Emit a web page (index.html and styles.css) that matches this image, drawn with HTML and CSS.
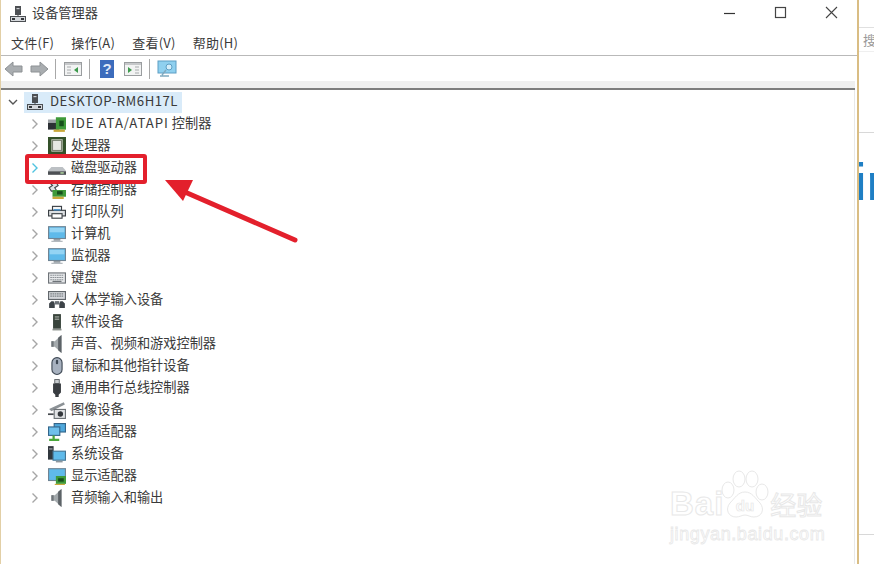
FILE: index.html
```html
<!DOCTYPE html>
<html lang="zh-CN">
<head>
<meta charset="utf-8">
<title>设备管理器</title>
<link rel="stylesheet" href="styles.css">
</head>
<body>
<svg class="defs" width="0" height="0">
  <defs>
    <symbol id="chev" viewBox="0 0 10 10"><path d="M2.500 0.500l4.500 4.500-4.500 4.500" fill="none" stroke="currentColor" stroke-width="1.400"/></symbol>
    <symbol id="pc" viewBox="0 0 16 16">
      <rect x="5" y="0" width="6" height="9" fill="#4c4f53"/>
      <rect x="6.500" y="2" width="3" height="1.200" fill="#c9ccd0"/>
      <rect x="7.500" y="8" width="1" height="3" fill="#4c4f53"/>
      <rect x="0.500" y="10.500" width="15" height="5" fill="#d5d8dc" stroke="#4c4f53"/>
      <rect x="2" y="12" width="3" height="2" fill="#33363a"/>
      <rect x="11" y="12" width="3" height="2" fill="#33363a"/>
    </symbol>
    <symbol id="ide" viewBox="0 0 16 16">
      <rect x="0" y="4" width="10" height="3" fill="#9ea2a6"/>
      <rect x="0" y="7" width="10" height="6" fill="#2c3034"/>
      <rect x="7" y="2" width="9" height="11" fill="#3f9a3a"/>
      <rect x="10" y="5" width="4" height="5" fill="#174f1c"/>
      <rect x="5" y="13" width="10" height="2" fill="#c9a83a"/>
    </symbol>
    <symbol id="cpu" viewBox="0 0 16 16">
      <rect x="1.500" y="0.500" width="13" height="14" fill="#d4d8cc" stroke="#34512a" stroke-width="3"/>
      <rect x="4" y="3" width="8" height="9" fill="#e6e8e2" stroke="#7c8474"/>
    </symbol>
    <symbol id="disk" viewBox="0 0 16 16">
      <path d="M3 7h10l3 3.500v3.500H0v-3.500z" fill="#bcc0c4"/>
      <rect x="0" y="11" width="16" height="3" fill="#4d5054"/>
      <rect x="11" y="11.800" width="3" height="1.200" fill="#b9e3a8"/>
    </symbol>
    <symbol id="storage" viewBox="0 0 16 16">
      <path d="M1 1h6l2 3-3 2 2 3H3L1 6l3-2z" fill="#dfe3e6" stroke="#44494d"/>
      <rect x="4" y="8" width="12" height="6" fill="#3f9a3a"/>
      <rect x="8" y="9" width="5" height="3" fill="#174f1c"/>
      <rect x="4" y="14" width="10" height="2" fill="#c9a83a"/>
    </symbol>
    <symbol id="printer" viewBox="0 0 16 16">
      <rect x="4" y="3" width="8" height="4" fill="#f5f6f7" stroke="#3a3f44"/>
      <rect x="0.500" y="6.500" width="15" height="5" fill="#dde0e3" stroke="#3a3f44"/>
      <rect x="3.500" y="9.500" width="9" height="4" fill="#fff" stroke="#3a3f44"/>
      <rect x="5" y="5.500" width="6" height="1.200" fill="#3a8fd0"/>
    </symbol>
    <symbol id="monitor" viewBox="0 0 16 16">
      <rect x="0.500" y="1.500" width="15" height="10.500" fill="#5fbaea" stroke="#6f8494"/>
      <rect x="1.500" y="2.500" width="13" height="4" fill="#94d4f4"/>
      <rect x="5" y="12.500" width="6" height="1.500" fill="#8e979e"/>
      <rect x="3" y="14" width="10" height="1" fill="#aab1b7"/>
    </symbol>
    <symbol id="keyboard" viewBox="0 0 16 16">
      <rect x="0.500" y="3.500" width="15" height="9" fill="#e6e8ea" stroke="#6e7378"/>
      <path d="M2 5.500h12M2 7.500h12M2 9.500h12" stroke="#8c9196" stroke-dasharray="1.500 .5"/>
      <path d="M4 11h8" stroke="#666b70"/>
    </symbol>
    <symbol id="hid" viewBox="0 0 16 16">
      <rect x="0.500" y="0.500" width="15" height="7" fill="#d5d8dc" stroke="#62676c"/>
      <path d="M2 2.500h12M2 4.500h12" stroke="#7c8186" stroke-dasharray="1.500 .5"/>
      <path d="M1 15V11l2-2h2l1 2v4zM10 15v-4l1-2h2l2 2v4z" fill="#3d4348"/>
      <rect x="6" y="9" width="4" height="3" fill="#6a7076"/>
    </symbol>
    <symbol id="soft" viewBox="0 0 16 16">
      <rect x="4.500" y="1" width="7" height="13" fill="#38433b"/>
      <rect x="6" y="3" width="4" height="1" fill="#aab0aa"/>
      <rect x="6" y="5" width="4" height="1" fill="#aab0aa"/>
      <rect x="4" y="14" width="8" height="1.500" fill="#8a8f8a"/>
    </symbol>
    <symbol id="speaker" viewBox="0 0 16 16">
      <path d="M3 5.500h3l6-5.500v16l-6-5.500H3z" fill="#a4aaad"/>
      <path d="M9 2.500l3-2.500v16l-3-2.500z" fill="#5d6367"/>
      <rect x="3" y="5.500" width="2" height="5" fill="#6f7579"/>
    </symbol>
    <symbol id="mouse" viewBox="0 0 16 16">
      <rect x="3.500" y="0.500" width="9" height="15" rx="4.500" fill="#a7b1bf" stroke="#3e4854"/>
      <rect x="7" y="2.500" width="2" height="4" rx="1" fill="#3e4854"/>
    </symbol>
    <symbol id="usb" viewBox="0 0 16 16">
      <rect x="6" y="0.500" width="4" height="3.500" fill="#c9cdd0" stroke="#5c6165" stroke-width=".8"/>
      <path d="M4.500 4h7v8l-2 2v2h-3v-2l-2-2z" fill="#393d41"/>
    </symbol>
    <symbol id="camera" viewBox="0 0 16 16">
      <path d="M1 7L14 1l1 2L3 9z" fill="#8c9296"/>
      <rect x="5.500" y="7.500" width="10" height="8" fill="#e0e2e4" stroke="#6e7377"/>
      <circle cx="11" cy="11.500" r="2.400" fill="#33373b"/>
      <rect x="0" y="11" width="5" height="1.500" fill="#45494d"/>
    </symbol>
    <symbol id="net" viewBox="0 0 16 16">
      <rect x="5.500" y="0.500" width="10" height="7.500" fill="#4fa8dc" stroke="#33658a"/>
      <rect x="0.500" y="3.500" width="10" height="7.500" fill="#6fc0ec" stroke="#33658a"/>
      <path d="M5 11v3M1 15h9" stroke="#4aa83c" stroke-width="2"/>
    </symbol>
    <symbol id="system" viewBox="0 0 16 16">
      <rect x="0" y="1" width="5" height="12" fill="#31373d"/>
      <rect x="1" y="3" width="3" height="1" fill="#b0b5ba"/>
      <rect x="4.500" y="5.500" width="11" height="8" fill="#5fbaea" stroke="#447594"/>
      <rect x="7" y="14" width="6" height="1.500" fill="#8e979e"/>
    </symbol>
    <symbol id="display" viewBox="0 0 16 16">
      <rect x="0.500" y="1.500" width="15" height="10.500" fill="#5fbaea" stroke="#6f8494"/>
      <rect x="7" y="8" width="9" height="7" fill="#3f9a3a"/>
      <rect x="9" y="10" width="5" height="3" fill="#174f1c"/>
      <rect x="6" y="15" width="9" height="1" fill="#c9a83a"/>
    </symbol>
  </defs>
</svg>

<div class="page">
  <main class="window">
    <header class="titlebar">
      <svg class="icon"><use href="#pc"/></svg>
      <span class="title">设备管理器</span>
      <div class="caption">
        <svg class="cap" viewBox="0 0 16 16"><path d="M2 8.500h11" stroke="#333" stroke-width="1.200"/></svg>
        <svg class="cap" viewBox="0 0 16 16"><rect x="2.500" y="2.500" width="10" height="10" fill="none" stroke="#444" stroke-width="1.200"/></svg>
        <svg class="cap" viewBox="0 0 16 16"><path d="M2 2l11 11M13 2L2 13" stroke="#444" stroke-width="1.100"/></svg>
      </div>
    </header>
    <nav class="menubar">
      <span>文件(F)</span><span>操作(A)</span><span>查看(V)</span><span>帮助(H)</span>
    </nav>
    <div class="toolbar">
      <svg class="tool" viewBox="0 0 20 20"><path d="M1 10l8-7v4h9v6H9v4z" fill="#a9adb0" stroke="#8d9194"/></svg>
      <svg class="tool" viewBox="0 0 20 20"><path d="M19 10l-8-7v4H2v6h9v4z" fill="#a9adb0" stroke="#8d9194"/></svg>
      <i class="sep"></i>
      <svg class="tool" viewBox="0 0 20 20"><rect x="1.500" y="3.500" width="17" height="13" fill="#f2f3f3" stroke="#9a9d9f"/><rect x="2" y="4" width="16" height="2" fill="#c6c8ca"/><path d="M15 8v6l-4-3z" fill="#3d9a4c"/><path d="M4 8h4M4 11h4M4 14h4" stroke="#a8abad"/></svg>
      <i class="sep"></i>
      <svg class="tool help" viewBox="0 0 20 20"><rect x="3" y="1" width="14" height="18" fill="#3c6cbc"/><text x="10" y="15" class="q">?</text></svg>
      <svg class="tool" viewBox="0 0 20 20"><rect x="1.500" y="3.500" width="17" height="13" fill="#f2f3f3" stroke="#9a9d9f"/><rect x="2" y="4" width="16" height="2" fill="#c6c8ca"/><path d="M5 8v6l4-3z" fill="#3d9a4c"/><path d="M12 8h4M12 11h4M12 14h4" stroke="#a8abad"/></svg>
      <i class="sep"></i>
      <svg class="tool" viewBox="0 0 20 20"><rect x="1" y="2" width="18" height="12" fill="#8fd0ef" stroke="#5d9ec4"/><circle cx="12" cy="8" r="3" fill="#d4eefa" stroke="#5d9ec4"/><path d="M9 11l-4 5M3 17h9" stroke="#7fa9bf" stroke-width="1.500"/></svg>
    </div>
    <div class="band"></div>
    <section class="tree">
      <div class="row root">
        <svg class="chev dark" viewBox="0 0 10 10"><path d="M1 3l4 4 4-4" fill="none" stroke="currentColor" stroke-width="1.400"/></svg>
        <div class="sel"><svg class="icon"><use href="#pc"/></svg><span>DESKTOP-RM6H17L</span></div>
      </div>
      <div class="row"><svg class="chev"><use href="#chev"/></svg><svg class="icon"><use href="#ide"/></svg><span><b class="latin">IDE ATA/ATAPI</b> 控制器</span></div>
      <div class="row"><svg class="chev"><use href="#chev"/></svg><svg class="icon"><use href="#cpu"/></svg><span>处理器</span></div>
      <div class="row"><svg class="chev hot"><use href="#chev"/></svg><svg class="icon"><use href="#disk"/></svg><span>磁盘驱动器</span></div>
      <div class="row"><svg class="chev"><use href="#chev"/></svg><svg class="icon"><use href="#storage"/></svg><span>存储控制器</span></div>
      <div class="row"><svg class="chev"><use href="#chev"/></svg><svg class="icon"><use href="#printer"/></svg><span>打印队列</span></div>
      <div class="row"><svg class="chev"><use href="#chev"/></svg><svg class="icon"><use href="#monitor"/></svg><span>计算机</span></div>
      <div class="row"><svg class="chev"><use href="#chev"/></svg><svg class="icon"><use href="#monitor"/></svg><span>监视器</span></div>
      <div class="row"><svg class="chev"><use href="#chev"/></svg><svg class="icon"><use href="#keyboard"/></svg><span>键盘</span></div>
      <div class="row"><svg class="chev"><use href="#chev"/></svg><svg class="icon"><use href="#hid"/></svg><span>人体学输入设备</span></div>
      <div class="row"><svg class="chev"><use href="#chev"/></svg><svg class="icon"><use href="#soft"/></svg><span>软件设备</span></div>
      <div class="row"><svg class="chev"><use href="#chev"/></svg><svg class="icon"><use href="#speaker"/></svg><span>声音、视频和游戏控制器</span></div>
      <div class="row"><svg class="chev"><use href="#chev"/></svg><svg class="icon"><use href="#mouse"/></svg><span>鼠标和其他指针设备</span></div>
      <div class="row"><svg class="chev"><use href="#chev"/></svg><svg class="icon"><use href="#usb"/></svg><span>通用串行总线控制器</span></div>
      <div class="row"><svg class="chev"><use href="#chev"/></svg><svg class="icon"><use href="#camera"/></svg><span>图像设备</span></div>
      <div class="row"><svg class="chev"><use href="#chev"/></svg><svg class="icon"><use href="#net"/></svg><span>网络适配器</span></div>
      <div class="row"><svg class="chev"><use href="#chev"/></svg><svg class="icon"><use href="#system"/></svg><span>系统设备</span></div>
      <div class="row"><svg class="chev"><use href="#chev"/></svg><svg class="icon"><use href="#display"/></svg><span>显示适配器</span></div>
      <div class="row"><svg class="chev"><use href="#chev"/></svg><svg class="icon"><use href="#speaker"/></svg><span>音频输入和输出</span></div>
    </section>
  </main>
  <aside class="behind">
    <div class="search">搜</div>
    <div class="word">ir</div>
    <div class="foot"></div>
  </aside>

  <div class="redbox"></div>
  <svg class="arrow" viewBox="0 0 874 564" width="874" height="564">
    <path d="M295 240L178 189" stroke="#e3202c" stroke-width="5" stroke-linecap="round"/>
    <path d="M165 180L193 180L183 201z" fill="#e3202c"/>
  </svg>
  <div class="mark">
    <div class="mark-top">
      <span class="bai">Bai</span>
      <svg class="paw" viewBox="0 0 50 52">
        <g fill="#fff" stroke="#e8e8e8" stroke-width="1">
          <ellipse cx="8" cy="20" rx="6" ry="8"/>
          <ellipse cx="19" cy="9" rx="6" ry="8"/>
          <ellipse cx="32" cy="9" rx="6" ry="8"/>
          <ellipse cx="42" cy="22" rx="6" ry="8"/>
          <path d="M25 22c7 0 10 6 15 11 5 6 2 14-6 14-4 0-6-2-9-2s-5 2-9 2c-8 0-11-8-6-14 5-5 8-11 15-11z"/>
        </g>
        <text x="25" y="41" class="du">du</text>
      </svg>
      <span class="jy">经验</span>
    </div>
    <div class="url">jingyan.baidu.com</div>
  </div>
</div>
</body>
</html>
```

FILE: styles.css
```css
* { box-sizing: border-box; }
html, body { margin: 0; padding: 0; background: #fff; }
body { width: 874px; height: 564px; overflow: hidden; font-family: "Noto Sans CJK SC", "Noto Sans", sans-serif; font-size: 13.2px; color: #3a3a3a; }
.defs { position: absolute; }
.page { position: relative; display: flex; width: 874px; height: 564px; overflow: hidden; }

.window { width: 859px; height: 564px; display: flex; flex-direction: column; border-left: 1px solid #e2cfa6; border-right: 2px solid #d9bd84; background: #fff; }

.titlebar { height: 30px; display: flex; align-items: center; padding-left: 9px; flex: none; }
.title { margin-left: 6px; margin-top: -6px; }
.titlebar .icon { margin-top: -2px; }
.caption { margin-left: auto; display: flex; gap: 35px; padding-right: 17px; margin-top: -4px; }
.cap { width: 16px; height: 16px; }

.menubar { height: 26px; display: flex; align-items: center; gap: 17px; padding-left: 10px; border-bottom: 1px solid #b9b9b9; flex: none; font-size: 13px; letter-spacing: .25px; }

.toolbar { height: 25px; display: flex; align-items: center; padding-left: 3px; flex: none; }
.tool { width: 20px; height: 20px; margin-right: 5px; }
.tool.help { margin-right: 6px; }
.sep { width: 1px; height: 20px; background: #a8a8a8; margin: 0 7px 0 1px; }
.q { font: bold 15px "Liberation Sans", sans-serif; fill: #dfe8f6; text-anchor: middle; }

.band { height: 9px; flex: none; background: #efefef; border-bottom: 2px solid #7d7d7d; margin-right: 2px; }

.tree { flex: 1; padding-top: 1px; margin-right: 2px; border-right: 1px solid #e8e8e8; }
.row { height: 22px; display: flex; align-items: center; padding-left: 29px; }
.row > span { margin-top: -4px; white-space: nowrap; }
.row.root { padding-left: 7px; }
.chev { width: 10px; height: 10px; flex: none; margin-right: 8px; color: #a6a6a6; }
.chev.hot { color: #4fc3e0; }
.chev.dark { color: #555; margin-right: 6px; }
.icon { width: 16px; height: 16px; flex: none; }
.row > .icon { width: 18px; height: 18px; margin-right: 5px; }
.latin { font-weight: 400; letter-spacing: .95px; }
.sel { display: flex; align-items: center; height: 21px; background: #d9ebf9; padding: 0 4px 0 3px; }
.sel .icon { margin-right: 7px; }
.sel span { font-size: 13.2px; letter-spacing: .5px; margin-top: -3px; white-space: nowrap; }

.behind { flex: 1; position: relative; display: flex; flex-direction: column; align-items: flex-start; overflow: hidden; }
.search { width: 100%; height: 25px; margin-top: 27px; border-top: 1px solid #e0e0e0; border-bottom: 1px solid #efefef; color: #9a9a9a; font-size: 13px; line-height: 23px; padding-left: 4px; white-space: nowrap; }
.word { width: 100%; margin-top: 80px; border-top: 1px solid #d8d8d8; padding-top: 19px; color: #1f7fc4; font: 52px/60px "Liberation Sans", sans-serif; text-indent: -4px; }
.foot { width: 100%; margin-top: 322px; border-top: 1px solid #d8d8d8; }

.redbox { position: absolute; left: 25px; top: 154px; width: 122px; height: 30px; border: 4px solid #e3202c; border-radius: 3px; }
.arrow { position: absolute; left: 0; top: 0; pointer-events: none; }

.mark { position: absolute; left: 670px; top: 470px; width: 170px; color: #fff; }
.mark-top { display: flex; align-items: flex-end; height: 52px; }
.bai { font: bold 33px/36px "Liberation Sans", sans-serif; color: #fff; -webkit-text-stroke: 1px #e8e8e8; letter-spacing: 1px; }
.paw { width: 50px; height: 52px; margin-left: -4px; flex: none; }
.du { font: bold 15px "Liberation Sans", sans-serif; fill: #fff; stroke: #e6e6e6; stroke-width: .7px; text-anchor: middle; }
.jy { font-size: 26px; line-height: 36px; color: #fff; -webkit-text-stroke: 1px #e8e8e8; white-space: nowrap; }
.url { font: 18px/20px "Liberation Sans", sans-serif; color: #fff; -webkit-text-stroke: .8px #e8e8e8; margin-top: 2px; letter-spacing: .6px; white-space: nowrap; }
```
